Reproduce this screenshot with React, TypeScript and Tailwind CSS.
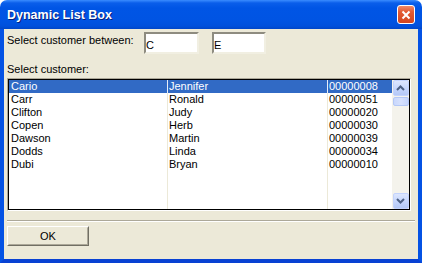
import React from "react";

const rows = [
  ["Cario", "Jennifer", "00000008"],
  ["Carr", "Ronald", "00000051"],
  ["Clifton", "Judy", "00000020"],
  ["Copen", "Herb", "00000030"],
  ["Dawson", "Martin", "00000039"],
  ["Dodds", "Linda", "00000034"],
  ["Dubi", "Bryan", "00000010"],
];

function Chevron({ up }: { up?: boolean }) {
  return (
    <svg width="9" height="6" viewBox="0 0 9 6">
      <path
        d={up ? "M1 5 L4.5 1.5 L8 5" : "M1 1 L4.5 4.5 L8 1"}
        fill="none"
        stroke="#4D6185"
        strokeWidth="2"
      />
    </svg>
  );
}

export default function App() {
  return (
    <div className="w-[422px] h-[263px] bg-white">
      <div className="w-[422px] h-[263px] flex flex-col rounded-t-[7px] overflow-hidden font-['Liberation_Sans',Arial,sans-serif] text-[11px] leading-[13px] text-black">
        {/* Title bar */}
        <div className="h-[29px] shrink-0 flex items-center pl-[7px] pr-[4px] bg-[linear-gradient(180deg,#3A8CFF_0px,#0A5EEA_3px,#0055E5_8px,#0054E3_20px,#0050DC_26px,#0046C8_29px)]">
          <span className="flex-1 text-white font-bold text-[12.5px] leading-[15px] pt-[1px] [text-shadow:1px_1px_0_#0A1F7A]">
            Dynamic List Box
          </span>
          <div className="w-[18px] h-[19px] mr-[3px] rounded-[3px] border border-white bg-[linear-gradient(180deg,#EF8A6A_0%,#E35A33_35%,#D2451F_100%)] flex items-center justify-center">
            <svg width="10" height="10" viewBox="0 0 10 10">
              <path d="M1.5 1.5 L8.5 8.5 M8.5 1.5 L1.5 8.5" stroke="white" strokeWidth="2" />
            </svg>
          </div>
        </div>
        {/* Body with frame */}
        <div className="flex-1 flex border-x-[4px] border-b-[4px] border-x-[#0452E4] border-b-[#0841D3]">
          <div className="flex-1 bg-[#ECE9D8] flex flex-col pl-[3px] pr-[3px] pt-[3px]">
            <div className="flex items-start h-[22px]">
              <div className="w-[137px] pt-[2px]">Select customer between:</div>
              <div className="w-[55px] h-[22px] bg-white border-2 border-t-[#8E8C80] border-l-[#8E8C80] border-b-[#F1EFE2] border-r-[#F1EFE2] pl-[0px] pt-[5px]">
                C
              </div>
              <div className="w-[54px] h-[22px] ml-[13px] bg-white border-2 border-t-[#8E8C80] border-l-[#8E8C80] border-b-[#F1EFE2] border-r-[#F1EFE2] pl-[0px] pt-[5px]">
                E
              </div>
            </div>
            <div className="mt-[9px]">Select customer:</div>
            <div className="mt-[2px] w-[404px] h-[133px] border border-t-[#ACA899] border-l-[#ACA899] border-b-white border-r-white">
              <div className="w-full h-full border border-black bg-white flex">
                <div className="flex-1 relative">
                  <div className="absolute inset-0 flex pointer-events-none">
                    <div className="w-[159px] border-r border-[#ECE9D8]" />
                    <div className="w-[160px] border-r border-[#ECE9D8]" />
                  </div>
                  <div className="relative flex flex-col">
                    {rows.map((r, i) => (
                      <div
                        key={i}
                        className={
                          "flex h-[13px] " +
                          (i === 0 ? "bg-[#316AC5] text-white" : "")
                        }
                      >
                        <div className={"w-[159px] pl-[2px] border-r " + (i === 0 ? "border-[#E8EEF8]" : "border-transparent")}>{r[0]}</div>
                        <div className={"w-[160px] pl-[1px] border-r " + (i === 0 ? "border-[#E8EEF8]" : "border-transparent")}>{r[1]}</div>
                        <div className="flex-1 pl-[1px]">{r[2]}</div>
                      </div>
                    ))}
                  </div>
                </div>
                {/* Scrollbar */}
                <div className="w-[17px] bg-[#F4F3EC] flex flex-col items-center">
                  <div className="w-[16px] h-[16px] rounded-[2px] border border-[#C3D3FD] bg-[linear-gradient(180deg,#DCE6FE_0%,#C3D4FC_60%,#B4C8F6_100%)] flex items-center justify-center">
                    <Chevron up />
                  </div>
                  <div className="w-[16px] h-[9px] mt-[1px] rounded-[2px] border border-[#B4C8F6] bg-[linear-gradient(90deg,#C9D8FC_0%,#D6E1FD_50%,#C4D4FB_100%)]" />
                  <div className="flex-1" />
                  <div className="w-[16px] h-[16px] rounded-[2px] border border-[#C3D3FD] bg-[linear-gradient(180deg,#DCE6FE_0%,#C3D4FC_60%,#B4C8F6_100%)] flex items-center justify-center">
                    <Chevron />
                  </div>
                </div>
              </div>
            </div>
            <div className="mt-[9px] h-[2px] border-t border-t-[#ACA899] border-b border-b-white" />
            <div className="mt-[4px] w-[82px] h-[20px] border border-t-white border-l-white border-b-[#716F64] border-r-[#716F64]">
              <div className="w-full h-full border border-transparent border-b-[#ACA899] border-r-[#ACA899] flex items-center justify-center">
                OK
              </div>
            </div>
          </div>
        </div>
      </div>
    </div>
  );
}
